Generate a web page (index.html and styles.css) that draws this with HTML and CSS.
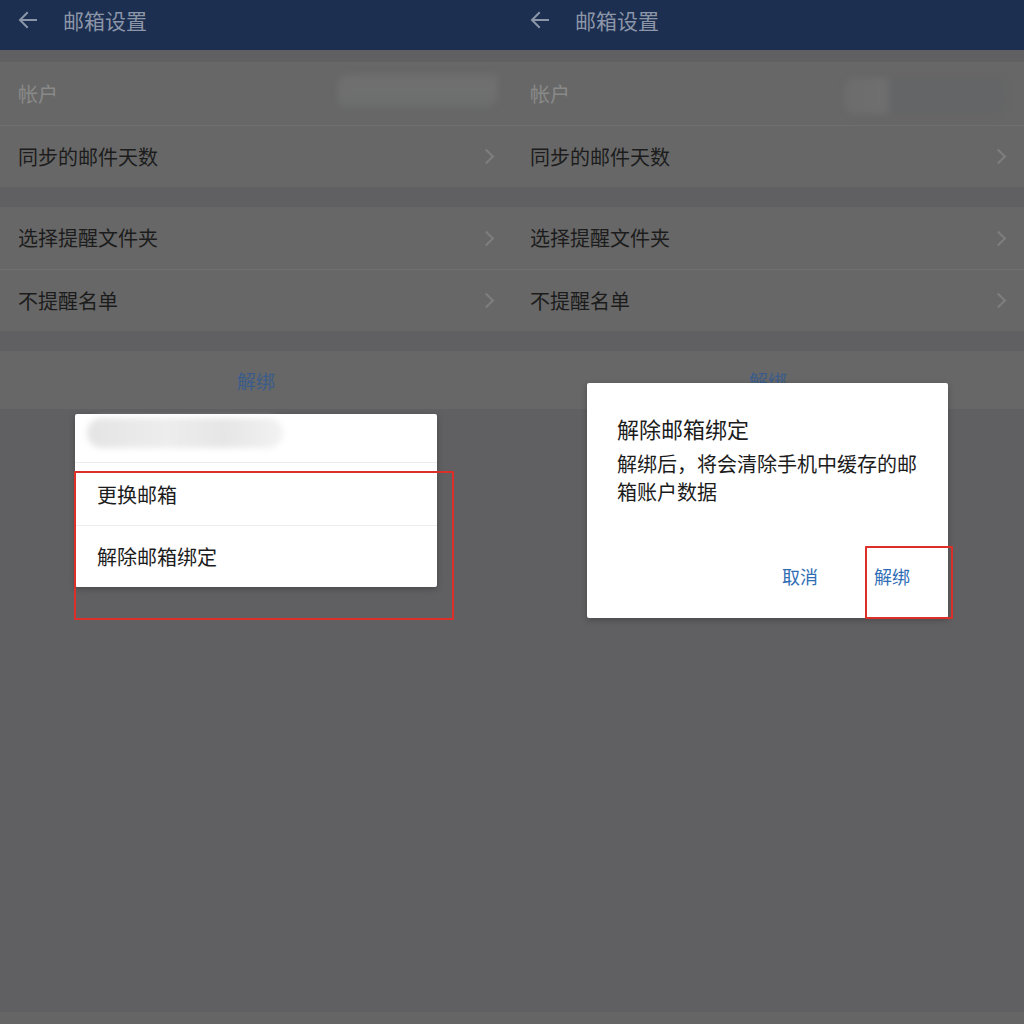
FILE: index.html
```html
<!DOCTYPE html>
<html lang="zh-CN">
<head>
<meta charset="utf-8">
<title>邮箱设置</title>
<link rel="stylesheet" href="styles.css">
</head>
<body>
<div class="screens">
  <!-- Screen 1: account action sheet -->
  <section class="phone">
    <header class="appbar">
      <svg class="back" viewBox="0 0 24 24" width="24" height="24"><path d="M20 12H5M11 5l-7 7 7 7" fill="none" stroke="currentColor" stroke-width="2" stroke-linecap="square"/></svg>
      <h1 class="title">邮箱设置</h1>
    </header>
    <div class="group">
      <div class="row row-account"><span class="label muted">帐户</span><span class="masked masked-a"></span></div>
      <div class="row"><span class="label">同步的邮件天数</span><span class="chev"></span></div>
    </div>
    <div class="group">
      <div class="row"><span class="label">选择提醒文件夹</span><span class="chev"></span></div>
      <div class="row"><span class="label">不提醒名单</span><span class="chev"></span></div>
    </div>
    <div class="group">
      <div class="row row-action"><span class="action">解绑</span></div>
    </div>
    <div class="footer-strip"></div>

    <div class="sheet">
      <div class="sheet-head"><span class="masked masked-email"></span></div>
      <div class="sheet-item">更换邮箱</div>
      <div class="sheet-item">解除邮箱绑定</div>
    </div>
    <div class="mark mark-sheet"></div>
  </section>

  <!-- Screen 2: unbind confirmation -->
  <section class="phone">
    <header class="appbar">
      <svg class="back" viewBox="0 0 24 24" width="24" height="24"><path d="M20 12H5M11 5l-7 7 7 7" fill="none" stroke="currentColor" stroke-width="2" stroke-linecap="square"/></svg>
      <h1 class="title">邮箱设置</h1>
    </header>
    <div class="group">
      <div class="row row-account"><span class="label muted">帐户</span><span class="masked masked-b"></span></div>
      <div class="row"><span class="label">同步的邮件天数</span><span class="chev"></span></div>
    </div>
    <div class="group">
      <div class="row"><span class="label">选择提醒文件夹</span><span class="chev"></span></div>
      <div class="row"><span class="label">不提醒名单</span><span class="chev"></span></div>
    </div>
    <div class="group">
      <div class="row row-action"><span class="action">解绑</span></div>
    </div>
    <div class="footer-strip"></div>

    <div class="dialog">
      <h2 class="dialog-title">解除邮箱绑定</h2>
      <p class="dialog-msg">解绑后，将会清除手机中缓存的邮箱账户数据</p>
      <div class="dialog-actions">
        <span class="btn">取消</span>
        <span class="btn">解绑</span>
      </div>
    </div>
    <div class="mark mark-btn"></div>
  </section>
</div>
</body>
</html>
```

FILE: styles.css
```css
* { box-sizing: border-box; margin: 0; padding: 0; }

html, body {
  width: 1024px;
  height: 1024px;
  overflow: hidden;
}

body {
  background: #606062;
  font-family: "Noto Sans CJK SC", "Noto Sans", sans-serif;
  color: #1c1c1c;
}

.screens {
  display: flex;
  width: 1024px;
  height: 1024px;
}

.phone {
  position: relative;
  width: 512px;
  height: 1024px;
  display: flex;
  flex-direction: column;
  background: #606062;
}

/* top app bar (dimmed under the modal scrim) */
.appbar {
  height: 50px;
  flex: none;
  background: #1c2f50;
  display: flex;
  align-items: center;
  padding: 0 0 10px 16px;
  color: #8c96a8;
}

.back { width: 24px; height: 24px; flex: none; }

.title {
  margin-left: 23px;
  font-size: 21px;
  font-weight: 400;
  line-height: 1;
  color: #8c96a8;
  letter-spacing: 0;
}

/* settings groups */
.group {
  margin-top: 12px;
  background: #676767;
  flex: none;
}
.group + .group { margin-top: 20px; }

.row {
  height: 62px;
  display: flex;
  align-items: center;
  justify-content: space-between;
  padding: 0 14px 0 18px;
  position: relative;
}
.row + .row { border-top: 1px solid #6f6f6f; }
.row-account { height: 63px; }

.label {
  font-size: 20px;
  line-height: 1;
  color: #1c1c1c;
}
.label.muted { color: #8a8a8a; }

.chev {
  width: 11px;
  height: 11px;
  border-top: 2px solid #7e7e7e;
  border-right: 2px solid #7e7e7e;
  transform: rotate(45deg);
  margin-right: 6px;
}

.row-action {
  height: 58px;
  justify-content: center;
  padding: 0;
}
.action {
  font-size: 19px;
  color: #3b5c8a;
  margin-top: 0;
}

.footer-strip {
  margin-top: auto;
  height: 12px;
  background: #656565;
}

/* blurred personal data */
.masked {
  position: absolute;
  display: block;
  filter: blur(3px);
}
.masked-a {
  left: 338px;
  top: 12px;
  width: 160px;
  height: 34px;
  background: linear-gradient(180deg, #6e6e6e 0%, #707070 50%, #6b6c6d 100%);
  border-radius: 10px 4px 14px 4px;
}
.masked-b {
  left: 332px;
  top: 16px;
  width: 162px;
  height: 36px;
  background: linear-gradient(90deg, #6c6c6c 0%, #6f6f6f 25%, #646566 30%, #646566 100%);
  border-radius: 10px;
}

/* action sheet */
.sheet {
  position: absolute;
  left: 75px;
  top: 414px;
  width: 362px;
  background: #ffffff;
  border-radius: 2px;
  box-shadow: 0 2px 6px rgba(0, 0, 0, 0.25);
}
.sheet-head {
  position: relative;
  height: 49px;
  border-bottom: 1px solid #ececec;
}
.masked-email {
  left: 12px;
  top: 4px;
  width: 196px;
  height: 30px;
  border-radius: 15px;
  background: linear-gradient(90deg, #e4e4e4 0%, #ededed 40%, #e6e6e6 70%, #f2f2f2 100%);
}
.sheet-item {
  height: 62px;
  display: flex;
  align-items: center;
  padding-left: 22px;
  font-size: 20px;
  color: #1c1c1c;
}
.sheet-item + .sheet-item { border-top: 1px solid #ededed; }

/* confirm dialog */
.dialog {
  position: absolute;
  left: 75px;
  top: 383px;
  width: 361px;
  height: 235px;
  background: #ffffff;
  border-radius: 2px;
  box-shadow: 0 2px 6px rgba(0, 0, 0, 0.25);
  padding: 30px 30px 0 30px;
  display: flex;
  flex-direction: column;
}
.dialog-title {
  font-size: 22px;
  font-weight: 400;
  line-height: 30px;
  color: #1c1c1c;
}
.dialog-msg {
  margin-top: 7px;
  font-size: 20px;
  line-height: 28px;
  color: #1c1c1c;
  width: 302px;
}
.dialog-actions {
  margin-top: auto;
  height: 70px;
  display: flex;
  justify-content: flex-end;
  align-items: flex-start;
  gap: 56px;
  padding: 14px 8px 0 0;
}
.btn {
  font-size: 18px;
  line-height: 28px;
  color: #2f6eb5;
}

/* red highlight frames */
.mark {
  position: absolute;
  border: 2px solid #dc2f2a;
  border-radius: 1px;
}
.mark-sheet {
  left: 74px;
  top: 471px;
  width: 380px;
  height: 149px;
}
.mark-btn {
  left: 353px;
  top: 546px;
  width: 88px;
  height: 73px;
}
```
